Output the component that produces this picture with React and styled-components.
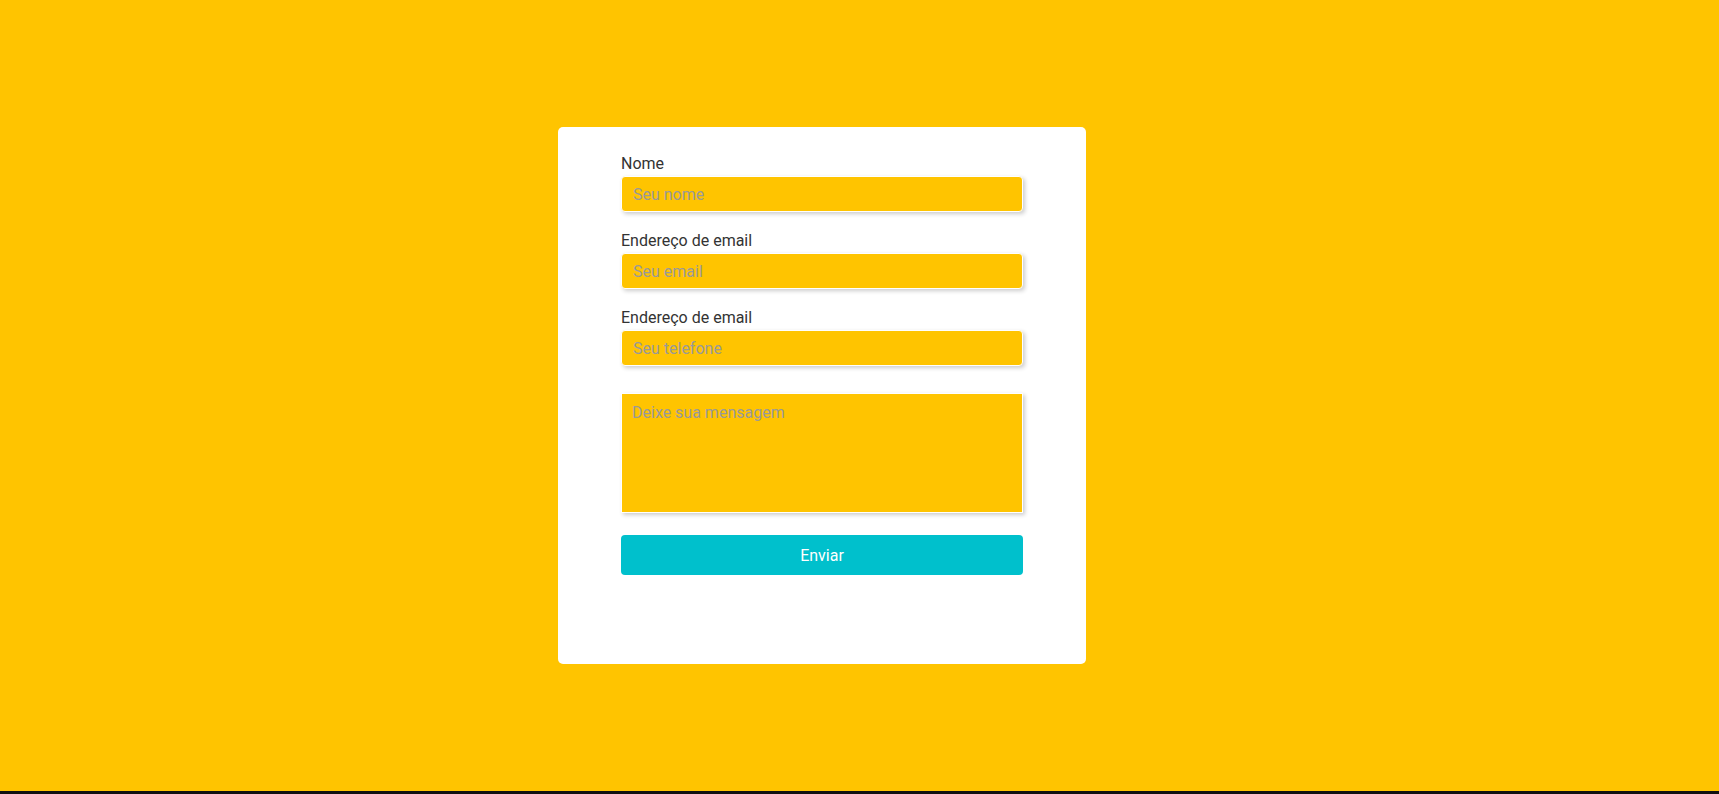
import React from 'react';
import styled, { createGlobalStyle } from 'styled-components';

const GlobalStyle = createGlobalStyle`
  html, body {
    margin: 0;
    padding: 0;
    background-color: #111;
    font-family: Roboto, "Liberation Sans", sans-serif;
  }
`;

const Page = styled.main`
  box-sizing: border-box;
  height: 791px;
  padding-right: 75px;
  background-color: #ffc400;
  display: flex;
  justify-content: center;
  align-items: center;
`;

const Card = styled.form`
  box-sizing: border-box;
  width: 528px;
  height: 537px;
  background-color: #fff;
  border-radius: 5px;
  padding: 27px 63px 0;
  display: flex;
  flex-direction: column;
`;

const Field = styled.div`
  display: flex;
  flex-direction: column;
  margin-bottom: 19px;
`;

const Label = styled.label`
  font-size: 16px;
  line-height: 19px;
  color: #333;
  margin-bottom: 3px;
`;

const Input = styled.input`
  box-sizing: border-box;
  width: 100%;
  height: 36px;
  padding: 0 11px;
  background-color: #ffc400;
  border: 1px solid #fff;
  border-radius: 4px;
  box-shadow: 2px 2px 4px rgba(0, 0, 0, 0.2);
  font: 400 16px Roboto, "Liberation Sans", sans-serif;
  color: #333;
  outline: none;

  &::placeholder {
    font: 400 16px Roboto, "Liberation Sans", sans-serif;
    color: #999;
  }
`;

const TextArea = styled.textarea`
  box-sizing: border-box;
  width: 100%;
  height: 120px;
  margin-top: 8px;
  padding: 9px 10px;
  background-color: #ffc400;
  border: 1px solid #fff;
  box-shadow: 2px 2px 4px rgba(0, 0, 0, 0.2);
  font: 400 16px Roboto, "Liberation Sans", sans-serif;
  color: #333;
  resize: none;
  outline: none;

  &::placeholder {
    font: 400 16px Roboto, "Liberation Sans", sans-serif;
    color: #999;
  }
`;

const Button = styled.button`
  margin-top: 22px;
  height: 40px;
  width: 100%;
  border: none;
  border-radius: 4px;
  background-color: #00c0cc;
  color: #fff;
  font: 400 16px Roboto, "Liberation Sans", sans-serif;
  cursor: pointer;
`;

const fields = [
  { label: 'Nome', placeholder: 'Seu nome', type: 'text' },
  { label: 'Endereço de email', placeholder: 'Seu email', type: 'email' },
  { label: 'Endereço de email', placeholder: 'Seu telefone', type: 'tel' },
];

const App = () => (
  <>
    <GlobalStyle />
    <Page>
      <Card onSubmit={(e) => e.preventDefault()}>
        {fields.map((f, i) => (
          <Field key={i}>
            <Label>{f.label}</Label>
            <Input type={f.type} placeholder={f.placeholder} />
          </Field>
        ))}
        <TextArea placeholder="Deixe sua mensagem" />
        <Button type="submit">Enviar</Button>
      </Card>
    </Page>
  </>
);

export default App;
